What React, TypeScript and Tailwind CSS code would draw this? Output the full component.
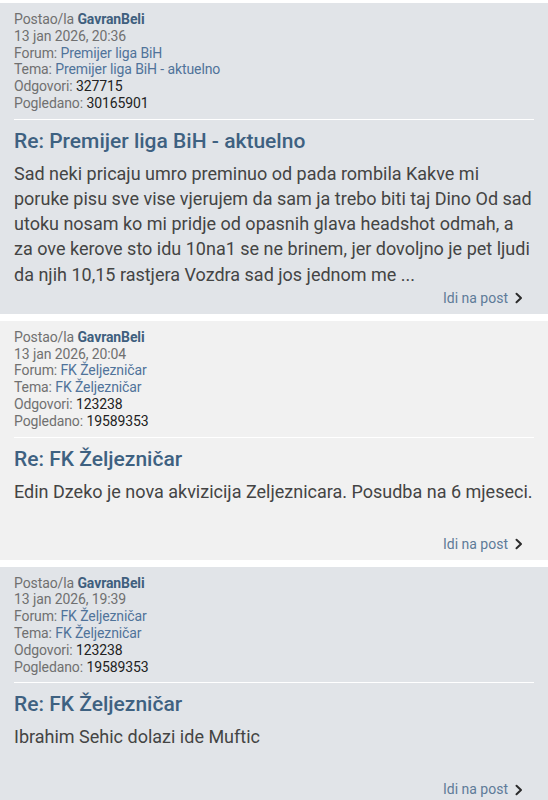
import React from "react";

type Post = {
  bg: string;
  date: string;
  forum: string;
  tema: string;
  odgovori: string;
  pogledano: string;
  title: string;
  body: string;
};

const posts: Post[] = [
  {
    bg: "bg-[#e1e4e8]",
    date: "13 jan 2026, 20:36",
    forum: "Premijer liga BiH",
    tema: "Premijer liga BiH - aktuelno",
    odgovori: "327715",
    pogledano: "30165901",
    title: "Re: Premijer liga BiH - aktuelno",
    body: "Sad neki pricaju umro preminuo od pada rombila Kakve mi poruke pisu sve vise vjerujem da sam ja trebo biti taj Dino Od sad utoku nosam ko mi pridje od opasnih glava headshot odmah, a za ove kerove sto idu 10na1 se ne brinem, jer dovoljno je pet ljudi da njih 10,15 rastjera Vozdra sad jos jednom me ...",
  },
  {
    bg: "bg-[#f1f1f1]",
    date: "13 jan 2026, 20:04",
    forum: "FK Željezničar",
    tema: "FK Željezničar",
    odgovori: "123238",
    pogledano: "19589353",
    title: "Re: FK Željezničar",
    body: "Edin Dzeko je nova akvizicija Zeljeznicara. Posudba na 6 mjeseci.",
  },
  {
    bg: "bg-[#e1e4e8]",
    date: "13 jan 2026, 19:39",
    forum: "FK Željezničar",
    tema: "FK Željezničar",
    odgovori: "123238",
    pogledano: "19589353",
    title: "Re: FK Željezničar",
    body: "Ibrahim Sehic dolazi ide Muftic",
  },
];

function Chevron() {
  return (
    <svg width="10" height="12" viewBox="0 0 10 12" className="ml-[6px]">
      <path d="M2.5 1.8 L7 6 L2.5 10.2" fill="none" stroke="#2b2b2b" strokeWidth="2" strokeLinecap="round" strokeLinejoin="round" />
    </svg>
  );
}

function Card({ p }: { p: Post }) {
  return (
    <div className={`${p.bg} px-[14px] pt-[8px] pb-[7px] mb-[7px]`}>
      <div className="text-[14px] leading-[16.8px] text-[#707070] tracking-[-0.1px]">
        <div>
          Postao/la <span className="font-bold text-[#3f5f7e]">GavranBeli</span>
        </div>
        <div>{p.date}</div>
        <div>
          Forum: <span className="text-[#50739a]">{p.forum}</span>
        </div>
        <div>
          Tema: <span className="text-[#50739a]">{p.tema}</span>
        </div>
        <div>
          Odgovori: <span className="text-[#222222]">{p.odgovori}</span>
        </div>
        <div>
          Pogledano: <span className="text-[#222222]">{p.pogledano}</span>
        </div>
      </div>
      <div className="mt-[7px] h-px bg-white" />
      <div className="mt-[8px] text-[21px] leading-[27px] font-medium text-[#3e6181]">{p.title}</div>
      <div className="mt-[6px] min-h-[54px] text-[18px] leading-[25.2px] text-[#444444]">{p.body}</div>
      <div className="flex justify-end items-center pr-[10px] mt-[3px] text-[14px] leading-[17px] text-[#5e7b98]">
        Idi na post
        <Chevron />
      </div>
    </div>
  );
}

export default function App() {
  return (
    <div className="w-[548px] bg-white pt-[3px] font-['Roboto',sans-serif]">
      {posts.map((p, i) => (
        <Card key={i} p={p} />
      ))}
    </div>
  );
}
